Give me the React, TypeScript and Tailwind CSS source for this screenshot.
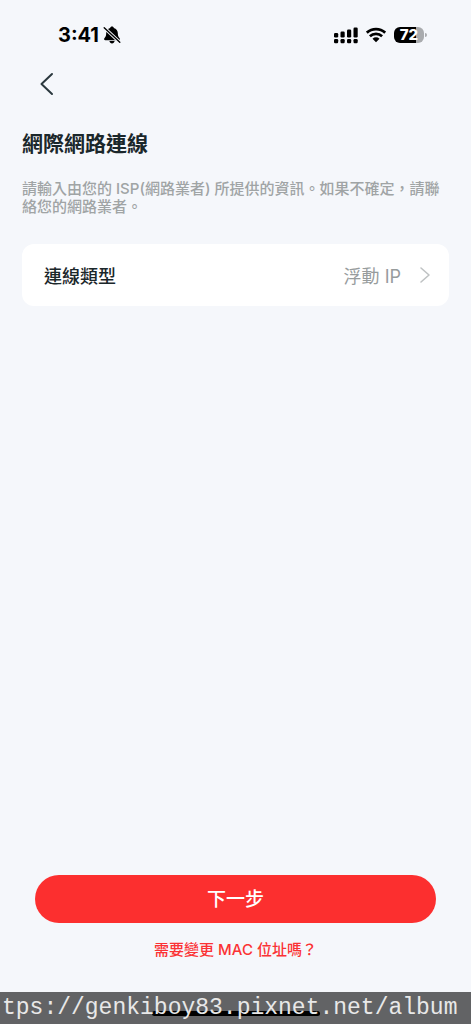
import { useState } from 'react';

function BellOffIcon() {
    return (
        <svg width="18" height="18" viewBox="0 0 18 18" aria-hidden="true">
            <path
                d="M9 0.5C7.9 0.5 7.3 1.1 7.2 1.9C4.6 2.5 3.2 4.6 3.2 7.1C3.2 10.1 2.5 11 1.4 12.2C0.8 12.9 1.1 14.2 2.3 14.2H15.7C16.9 14.2 17.2 12.9 16.6 12.2C15.5 11 14.8 10.1 14.8 7.1C14.8 4.6 13.4 2.5 10.8 1.9C10.7 1.1 10.1 0.5 9 0.5Z"
                fill="black"
            />
            <path d="M6.4 15.1H11.6C11.3 16.6 10.3 17.4 9 17.4C7.7 17.4 6.7 16.6 6.4 15.1Z" fill="black" />
            <path d="M1 1.5L17 16.5" stroke="#f5f7fb" strokeWidth="3.2" />
            <path d="M1.2 1.7L16.8 16.3" stroke="black" strokeWidth="1.4" strokeLinecap="round" />
        </svg>
    );
}

function SignalIcon() {
    return (
        <svg width="24" height="17" viewBox="0 0 24 17" aria-hidden="true">
            <rect x="0" y="6" width="4.2" height="4.5" rx="1.2" />
            <rect x="6.5" y="4.5" width="4.2" height="6" rx="1.2" />
            <rect x="13" y="2.5" width="4.2" height="8" rx="1.2" />
            <rect x="19.5" y="0.5" width="4.2" height="10" rx="1.2" />
            <rect x="0" y="12" width="4.2" height="4.2" rx="1.2" />
            <rect x="6.5" y="12" width="4.2" height="4.2" rx="1.2" />
            <rect x="13" y="12" width="4.2" height="4.2" rx="1.2" />
            <rect x="19.5" y="12" width="4.2" height="4.2" rx="1.2" />
        </svg>
    );
}

function WifiIcon() {
    return (
        <svg width="20" height="16" viewBox="1 0 20 16" fill="none" stroke="black" strokeWidth="2.7" aria-hidden="true">
            <path d="M1.8 5.7C7 0.8 15 0.8 20.2 5.7" />
            <path d="M4.9 9.2C8.3 6.1 13.7 6.1 17.1 9.2" />
            <path d="M7.5 11.7C9.5 9.9 12.5 9.9 14.5 11.7L11 15.2Z" fill="black" stroke="none" />
        </svg>
    );
}

function Battery({ level }: { level: number }) {
    return (
        <div className="flex items-center gap-px">
            <div
                className="flex h-4 w-[30px] items-center justify-center rounded-md"
                style={{ background: `linear-gradient(to right, #000 ${level}%, #a9abae ${level}%)` }}
            >
                <span className="text-[15px] leading-4 font-extrabold text-white">{level}</span>
            </div>
            <div className="h-1 w-0.5 rounded-r bg-[#a9abae]" />
        </div>
    );
}

function StatusBar() {
    return (
        <div className="flex items-center justify-between pt-[21px] pr-11 pl-[58px]">
            <div className="flex items-center gap-1">
                <span className="text-xl leading-7 font-bold text-black">3:41</span>
                <BellOffIcon />
            </div>
            <div className="flex items-center gap-2">
                <SignalIcon />
                <WifiIcon />
                <Battery level={72} />
            </div>
        </div>
    );
}

export default function App() {
    const [connectionType] = useState('浮動 IP');

    return (
        <div className="flex min-h-screen flex-col bg-[#f5f7fb] font-[Inter,'Noto_Sans_CJK_TC',sans-serif] text-[#1b272b]">
            <StatusBar />

            <header className="px-[30px] pt-[19px]">
                <button type="button" aria-label="返回" className="flex h-8 w-8 items-center justify-center">
                    <svg width="16" height="24" viewBox="0 0 16 24" fill="none" stroke="#2b383e" strokeWidth="2" strokeLinecap="round" strokeLinejoin="round" aria-hidden="true">
                        <path d="M14 2L3.5 12L14 22" />
                    </svg>
                </button>
            </header>

            <main className="flex grow flex-col px-[22px] pt-7">
                <h1 className="text-[21px] leading-8 font-bold">網際網路連線</h1>
                <p className="mt-5 text-[15px] leading-[18px] font-medium text-[#a0a4a5]">
                    請輸入由您的 ISP(網路業者) 所提供的資訊。如果不確定，請聯絡您的網路業者。
                </p>

                <button type="button" className="mt-7 flex h-[62px] w-full items-center rounded-xl bg-white pr-[18px] pl-[22px] text-lg">
                    <span className="grow pt-1 text-left font-medium">連線類型</span>
                    <span className="pt-1 text-[#979c9d]">{connectionType}</span>
                    <svg className="ml-[18px]" width="12" height="18" viewBox="0 0 12 18" fill="none" stroke="#bfc2c3" strokeWidth="1.6" strokeLinecap="round" strokeLinejoin="round" aria-hidden="true">
                        <path d="M2 2L10 9L2 16" />
                    </svg>
                </button>
            </main>

            <div className="flex flex-col items-center px-[35px] pb-8">
                <button type="button" className="h-12 w-full rounded-full bg-[#fc2f2f] pt-0.5 text-[19px] font-medium text-white">
                    下一步
                </button>
                <a href="#mac" className="mt-[17px] text-[15px] leading-5 font-medium text-[#fb3234]">
                    需要變更 MAC 位址嗎？
                </a>
            </div>

            <footer className="relative h-8 overflow-hidden bg-[#626365] pl-0.5">
                <div className="absolute bottom-2 left-1/2 h-[5px] w-[168px] -translate-x-1/2 rounded-full bg-black" />
                <p className="relative font-['Liberation_Mono',monospace] text-[23px] leading-8 whitespace-nowrap text-[#e8e8e8]">
                    tps://genkiboy83.pixnet.net/album
                </p>
            </footer>
        </div>
    );
}
